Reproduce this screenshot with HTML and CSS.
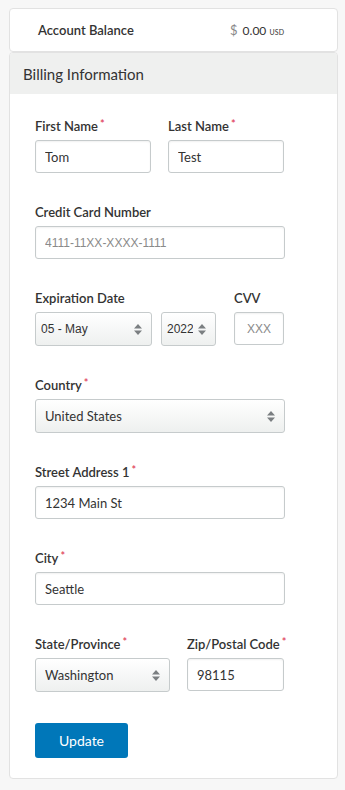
FILE: index.html
```html
<!DOCTYPE html>
<html lang="en">
<head>
  <meta charset="UTF-8" />
  <title>Billing Information</title>
  <meta name="viewport" content="width=device-width, initial-scale=1.0" />
  <link rel="stylesheet" href="styles.css">
</head>
<body>
  <div class="page">
    <div class="balance-card">
      <span class="balance-label">Account Balance</span>
      <span class="balance-value"><span class="currency">$</span> 0.00 <span class="usd">USD</span></span>
    </div>

    <div class="billing-card">
      <div class="billing-header">Billing Information</div>
      <form class="billing-body">
        <div class="row">
          <div class="field w-116">
            <label>First Name<span class="req">*</span></label>
            <input type="text" value="Tom" />
          </div>
          <div class="field w-116">
            <label>Last Name<span class="req">*</span></label>
            <input type="text" value="Test" />
          </div>
        </div>

        <div class="field w-full">
          <label>Credit Card Number</label>
          <input type="text" class="mono" placeholder="4111-11XX-XXXX-1111" />
        </div>

        <div class="row exp-row">
          <div class="field">
            <label>Expiration Date</label>
            <div class="exp-selects">
              <div class="select-wrap w-117">
                <select class="mono"><option>05 - May</option></select>
                <svg class="arrows" width="8" height="11" viewBox="0 0 8 11"><path d="M4 0 L8 4.5 H0 Z M0 6.5 H8 L4 11 Z" fill="#7b7f82"/></svg>
              </div>
              <div class="select-wrap w-55">
                <select class="mono"><option>2022</option></select>
                <svg class="arrows" width="8" height="11" viewBox="0 0 8 11"><path d="M4 0 L8 4.5 H0 Z M0 6.5 H8 L4 11 Z" fill="#7b7f82"/></svg>
              </div>
            </div>
          </div>
          <div class="field w-50">
            <label>CVV</label>
            <input type="text" class="mono cvv" placeholder="XXX" />
          </div>
        </div>

        <div class="field w-full">
          <label>Country<span class="req">*</span></label>
          <div class="select-wrap">
            <select><option>United States</option></select>
            <svg class="arrows" width="8" height="11" viewBox="0 0 8 11"><path d="M4 0 L8 4.5 H0 Z M0 6.5 H8 L4 11 Z" fill="#7b7f82"/></svg>
          </div>
        </div>

        <div class="field w-full">
          <label>Street Address 1<span class="req">*</span></label>
          <input type="text" value="1234 Main St" />
        </div>

        <div class="field w-full">
          <label>City<span class="req">*</span></label>
          <input type="text" value="Seattle" />
        </div>

        <div class="row">
          <div class="field w-135">
            <label>State/Province<span class="req">*</span></label>
            <div class="select-wrap">
              <select><option>Washington</option></select>
              <svg class="arrows" width="8" height="11" viewBox="0 0 8 11"><path d="M4 0 L8 4.5 H0 Z M0 6.5 H8 L4 11 Z" fill="#7b7f82"/></svg>
            </div>
          </div>
          <div class="field w-97">
            <label>Zip/Postal Code<span class="req">*</span></label>
            <input type="text" value="98115" />
          </div>
        </div>

        <button type="button" class="update-btn">Update</button>
      </form>
    </div>
  </div>
</body>
</html>
```

FILE: styles.css
```css
* { box-sizing: border-box; }
body {
  margin: 0;
  background: #f7f7f7;
  font-family: Lato, "Liberation Sans", sans-serif;
  color: #333;
}
.page { width: 329px; margin: 8px 0 0 9px; }

/* balance */
.balance-card {
  display: flex; align-items: center;
  height: 44px;
  padding-left: 28px;
  background: #fff;
  border: 1px solid #e2e2e2;
  border-radius: 4px;
}
.balance-label { width: 192px; font-size: 13px; font-weight: 600; color: #333; }
.balance-value { font-size: 12px; color: #333; }
.currency { color: #888; font-size: 13px; margin-right: 2px; }
.usd { font-size: 7px; letter-spacing: 0.2px; }

/* billing card */
.billing-card {
  background: #fff;
  border: 1px solid #e2e2e2;
  border-radius: 4px;
  overflow: hidden;
}
.billing-header {
  height: 41px;
  display: flex; align-items: center;
  padding-left: 13px;
  background: #eff0ef;
  font-size: 15px;
  color: #333;
}
.billing-body {
  display: flex; flex-direction: column;
  padding: 24px 0 20px 25px;
}
.row { display: flex; gap: 17px; }
.exp-row { gap: 18px; }
.field { display: flex; flex-direction: column; margin-bottom: 31px; }
.field label {
  height: 16px; line-height: 16px;
  margin-bottom: 6px;
  font-size: 13px; font-weight: 600; color: #333;
  white-space: nowrap;
}
.req { color: #e0405a; font-size: 11px; vertical-align: top; margin-left: 2px; line-height: 12px; }

.w-full { width: 250px; }
.w-116 { width: 116px; }
.w-117 { width: 117px; }
.w-55 { width: 55px; }
.w-50 { width: 50px; }
.w-135 { width: 135px; }
.w-97 { width: 97px; }

input, select {
  width: 100%;
  height: 33px;
  padding: 0 9px;
  border: 1px solid #c6cbcc;
  border-radius: 3px;
  font-family: Lato, "Liberation Sans", sans-serif;
  font-size: 13px;
  color: #333;
  background: #fff;
  box-shadow: inset 0 1px 2px rgba(0,0,0,0.06);
  outline: none;
}
input::placeholder { color: #8a8a8a; }
.mono { font-family: "Liberation Sans", Arial, sans-serif; font-size: 12px; }
.cvv { text-align: center; padding: 0 4px; }

.exp-selects { display: flex; gap: 9px; }
.select-wrap { position: relative; }
.select-wrap select {
  appearance: none; -webkit-appearance: none;
  height: 34px;
  padding-right: 22px;
  background: linear-gradient(#ffffff, #eef0ef);
  box-shadow: none;
}
.select-wrap .mono { padding-left: 5px; }
.arrows { position: absolute; right: 10px; top: 12px; pointer-events: none; }

.update-btn {
  width: 93px; height: 35px;
  border: none; border-radius: 3px;
  background: #0077b9;
  color: #fff;
  font-family: Lato, sans-serif;
  font-size: 14px;
  cursor: pointer;
}
```
